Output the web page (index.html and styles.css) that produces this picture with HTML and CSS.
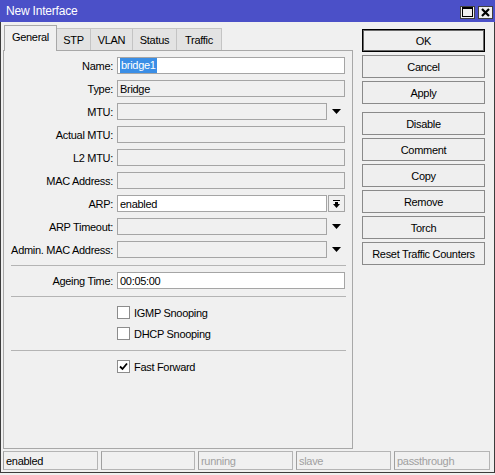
FILE: index.html
```html
<!DOCTYPE html>
<html>
<head>
<meta charset="utf-8">
<title>New Interface</title>
<link rel="stylesheet" href="styles.css">
</head>
<body>
<div class="window">
  <div class="titlebar">
    <span class="title">New Interface</span>
    <div class="tb-buttons">
      <span class="tb-btn"><svg width="11" height="10" viewBox="0 0 11 10"><rect x="0.5" y="0.5" width="10" height="9" fill="none" stroke="#000"/><rect x="0" y="0" width="11" height="2" fill="#000"/></svg></span>
      <span class="tb-btn"><svg width="9" height="9" viewBox="0 0 9 9"><path d="M1 1 L8 8 M8 1 L1 8" stroke="#000" stroke-width="2.2"/></svg></span>
    </div>
  </div>
  <div class="main">
    <div class="left">
      <div class="tabs">
        <span class="tab tab-active w-general">General</span>
        <span class="tab w-stp">STP</span>
        <span class="tab w-vlan">VLAN</span>
        <span class="tab w-status">Status</span>
        <span class="tab w-traffic">Traffic</span>
      </div>
      <div class="panel">
        <div class="form">
          <div class="row"><span class="label">Name:</span><span class="input white"><span class="sel">bridge1</span></span></div>
          <div class="row"><span class="label">Type:</span><span class="input">Bridge</span></div>
          <div class="row"><span class="label">MTU:</span><span class="input short"></span><span class="arrow"><svg width="9" height="5" viewBox="0 0 9 5"><path d="M0 0 H9 L4.5 5 Z" fill="#000"/></svg></span></div>
          <div class="row"><span class="label">Actual MTU:</span><span class="input"></span></div>
          <div class="row"><span class="label">L2 MTU:</span><span class="input"></span></div>
          <div class="row"><span class="label">MAC Address:</span><span class="input"></span></div>
          <div class="row"><span class="label">ARP:</span><span class="input short white">enabled</span><span class="arrow boxed"><svg width="9" height="8" viewBox="0 0 9 8"><rect x="1" y="0" width="7" height="1" fill="#000"/><path d="M3 2 H6 V4 H8 L4.5 8 L1 4 H3 Z" fill="#000"/></svg></span></div>
          <div class="row"><span class="label">ARP Timeout:</span><span class="input short"></span><span class="arrow"><svg width="9" height="5" viewBox="0 0 9 5"><path d="M0 0 H9 L4.5 5 Z" fill="#000"/></svg></span></div>
          <div class="row"><span class="label">Admin. MAC Address:</span><span class="input short"></span><span class="arrow"><svg width="9" height="5" viewBox="0 0 9 5"><path d="M0 0 H9 L4.5 5 Z" fill="#000"/></svg></span></div>
          <div class="sep"></div>
          <div class="row"><span class="label">Ageing Time:</span><span class="input white">00:05:00</span></div>
          <div class="sep"></div>
          <div class="checks">
            <div class="check"><span class="box"></span><span>IGMP Snooping</span></div>
            <div class="check"><span class="box"></span><span>DHCP Snooping</span></div>
          </div>
          <div class="sep"></div>
          <div class="checks">
            <div class="check"><span class="box"><svg width="11" height="11" viewBox="0 0 11 11"><path d="M2 5.5 L4.5 8 L9 2.5" fill="none" stroke="#000" stroke-width="1.8"/></svg></span><span>Fast Forward</span></div>
          </div>
        </div>
      </div>
    </div>
    <div class="buttons">
      <span class="btn btn-default">OK</span>
      <span class="btn">Cancel</span>
      <span class="btn">Apply</span>
      <span class="btn group">Disable</span>
      <span class="btn">Comment</span>
      <span class="btn">Copy</span>
      <span class="btn">Remove</span>
      <span class="btn">Torch</span>
      <span class="btn">Reset Traffic Counters</span>
    </div>
  </div>
  <div class="statusbar">
    <span class="seg s1">enabled</span>
    <span class="seg s2"></span>
    <span class="seg s3 dim">running</span>
    <span class="seg s4 dim">slave</span>
    <span class="seg s5 dim">passthrough</span>
  </div>
</div>
</body>
</html>
```

FILE: styles.css
```css
* { box-sizing: border-box; }
html, body { margin: 0; padding: 0; background: #f0f0f0; }
body {
  font-family: "Liberation Sans", Arial, sans-serif;
  font-size: 11px;
  letter-spacing: -0.3px;
  color: #000;
}
.window {
  width: 495px;
  height: 473px;
  background: #f0f0f0;
  border-left: 1px solid #3c3c3c;
  border-right: 1px solid #3c3c3c;
  border-bottom: 1px solid #3c3c3c;
  display: flex;
  flex-direction: column;
}
.titlebar {
  height: 22px;
  background: #4b50c8;
  display: flex;
  align-items: center;
  justify-content: space-between;
  padding: 0 2px 0 6px;
  margin: 0 -1px;
}
.title { color: #fff; font-size: 12px; letter-spacing: -0.2px; }
.tb-buttons { display: flex; gap: 3px; padding-top: 2px; }
.tb-btn {
  width: 15px;
  height: 13px;
  background: #f0f0f0;
  border: 1px solid #404040;
  display: flex;
  align-items: center;
  justify-content: center;
}
.main {
  height: 427px;
  display: flex;
  padding: 3px 0 0 2px;
}
.left { width: 350px; display: flex; flex-direction: column; }
.tabs {
  height: 25px;
  display: flex;
  align-items: flex-end;
  padding-left: 1px;
}
.tab {
  height: 22px;
  display: flex;
  align-items: center;
  justify-content: center;
  background: #e3e3e3;
  border: 1px solid #c4c4c4;
  border-bottom: none;
  margin-left: -1px;
  padding-top: 1px;
}
.tab:first-child { margin-left: 0; }
.tab-active {
  height: 26px;
  margin-bottom: -1px;
  background: #f0f0f0;
  border-color: #a8a8a8;
  position: relative;
  z-index: 1;
  padding-top: 0;
  padding-bottom: 3px;
}
.w-general { width: 53px; }
.w-stp { width: 35px; }
.w-vlan { width: 43px; }
.w-status { width: 45px; }
.w-traffic { width: 46px; }
.panel {
  height: 399px;
  border: 1px solid #a8a8a8;
  background: #f0f0f0;
}
.form {
  display: flex;
  flex-direction: column;
  gap: 6px;
  padding-top: 6px;
}
.row { display: flex; align-items: center; height: 17px; }
.label { width: 109px; text-align: right; margin-right: 4px; white-space: nowrap; }
.input {
  width: 228px;
  height: 17px;
  border: 1px solid #a5a5a5;
  background: #f0f0f0;
  display: flex;
  align-items: center;
  padding-left: 2px;
  white-space: nowrap;
}
.input.white { background: #fff; }
.input.short { width: 210px; }
.sel { background: #3a8ee6; color: #fff; padding: 0 1px; line-height: 15px; }
.arrow {
  width: 17px;
  height: 17px;
  margin-left: 1px;
  display: flex;
  align-items: center;
  justify-content: center;
}
.arrow.boxed { border: 1px solid #a5a5a5; background: #f0f0f0; }
.sep {
  height: 1px;
  margin: 1px 6px 0 7px;
  background: #b4b4b4;
}
.checks {
  display: flex;
  flex-direction: column;
  gap: 8px;
  padding: 3px 0 3px 113px;
}
.check { display: flex; align-items: center; gap: 4px; height: 13px; }
.box {
  width: 13px;
  height: 13px;
  border: 1px solid #8c8c8c;
  background: #fff;
  display: flex;
  align-items: center;
  justify-content: center;
}
.buttons {
  width: 123px;
  margin-left: 9px;
  padding-top: 4px;
  display: flex;
  flex-direction: column;
  gap: 3px;
}
.btn {
  height: 23px;
  border: 1px solid #8a8a8a;
  background: #efefef;
  display: flex;
  align-items: center;
  justify-content: center;
  white-space: nowrap;
}
.btn-default { border-color: #000; box-shadow: inset 0 0 0 1px #6a6a6a; }
.btn.group { margin-top: 5px; }
.statusbar {
  height: 19px;
  margin-top: 2px;
  display: flex;
  gap: 3px;
  padding-left: 2px;
  padding-right: 4px;
}
.seg {
  height: 19px;
  border: 1px solid #b4b4b4;
  border-left-color: #a0a0a0;
  display: flex;
  align-items: center;
  padding-left: 2px;
}
.s1 { width: 95px; }
.s2 { width: 94px; }
.s3 { width: 95px; }
.s4 { width: 95px; }
.s5 { flex: 1; }
.dim { color: #a0a0a0; }
```
